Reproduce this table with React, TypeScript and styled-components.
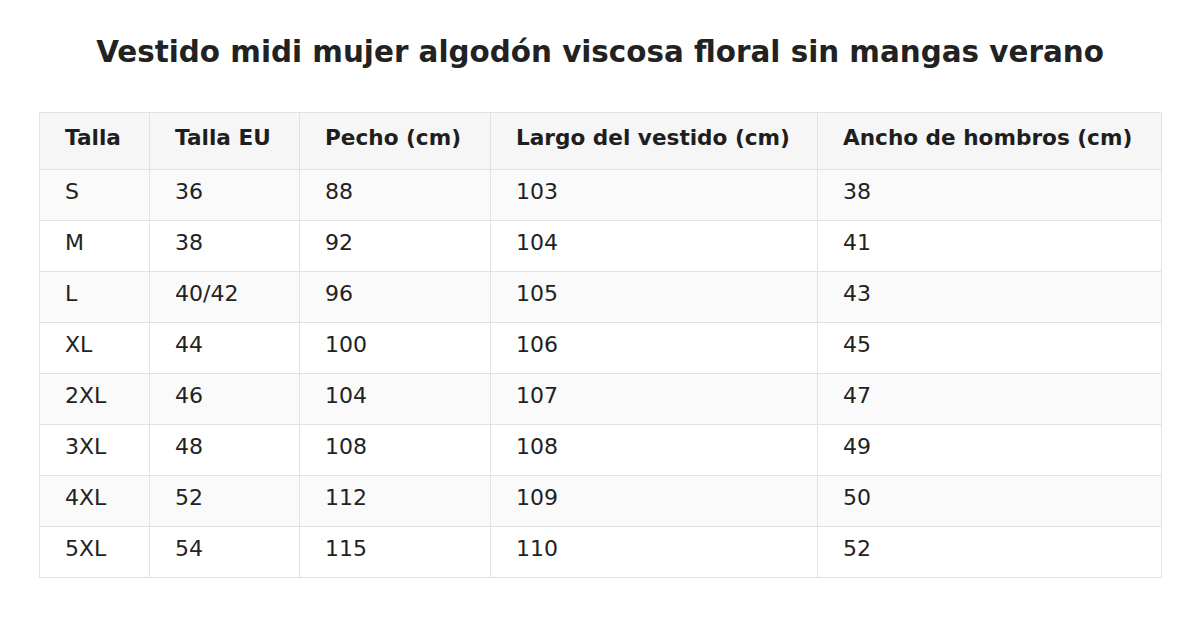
import React from "react";
import styled, { createGlobalStyle } from "styled-components";

const GlobalStyle = createGlobalStyle`
  html, body {
    margin: 0;
    padding: 0;
    background: #fff;
  }
  body {
    font-family: "DejaVu Sans", Verdana, sans-serif;
    color: #222;
  }
`;

const columns = [
  { label: "Talla", width: 110 },
  { label: "Talla EU", width: 150 },
  { label: "Pecho (cm)", width: 191 },
  { label: "Largo del vestido (cm)", width: 327 },
  { label: "Ancho de hombros (cm)", width: 344 },
];

const rows = [
  ["S", "36", "88", "103", "38"],
  ["M", "38", "92", "104", "41"],
  ["L", "40/42", "96", "105", "43"],
  ["XL", "44", "100", "106", "45"],
  ["2XL", "46", "104", "107", "47"],
  ["3XL", "48", "108", "108", "49"],
  ["4XL", "52", "112", "109", "50"],
  ["5XL", "54", "115", "110", "52"],
];

const Page = styled.div`
  width: 1122px;
  margin: 0 auto;
  padding-top: 31px;
`;

const Title = styled.h1`
  margin: 0;
  height: 81px;
  font-size: 29.4px;
  font-weight: bold;
  line-height: 42px;
  text-align: center;
  color: #222;
`;

const SizeTable = styled.table`
  width: 1122px;
  border-collapse: collapse;
  table-layout: fixed;
`;

const HeadCell = styled.th<{ $width: number }>`
  box-sizing: border-box;
  width: ${(p) => p.$width}px;
  height: 57px;
  padding: 0 0 7px 25px;
  border: 1px solid #e2e2e2;
  background: #f6f6f6;
  text-align: left;
  font-size: 21.6px;
  font-weight: bold;
  color: #1e1e1e;
`;

const Row = styled.tr<{ $striped: boolean }>`
  background: ${(p) => (p.$striped ? "#fafafa" : "#fff")};
`;

const Cell = styled.td`
  box-sizing: border-box;
  height: 51px;
  padding: 0 0 7px 25px;
  border: 1px solid #e2e2e2;
  text-align: left;
  font-size: 22px;
  color: #222;
`;

const App = () => {
  return (
    <>
      <GlobalStyle />
      <Page>
        <Title>Vestido midi mujer algodón viscosa floral sin mangas verano</Title>
        <SizeTable>
          <thead>
            <tr>
              {columns.map((c) => (
                <HeadCell key={c.label} $width={c.width}>
                  {c.label}
                </HeadCell>
              ))}
            </tr>
          </thead>
          <tbody>
            {rows.map((r, idx) => (
              <Row key={r[0]} $striped={idx % 2 === 0}>
                {r.map((c, i) => (
                  <Cell key={i}>{c}</Cell>
                ))}
              </Row>
            ))}
          </tbody>
        </SizeTable>
      </Page>
    </>
  );
};

export default App;
